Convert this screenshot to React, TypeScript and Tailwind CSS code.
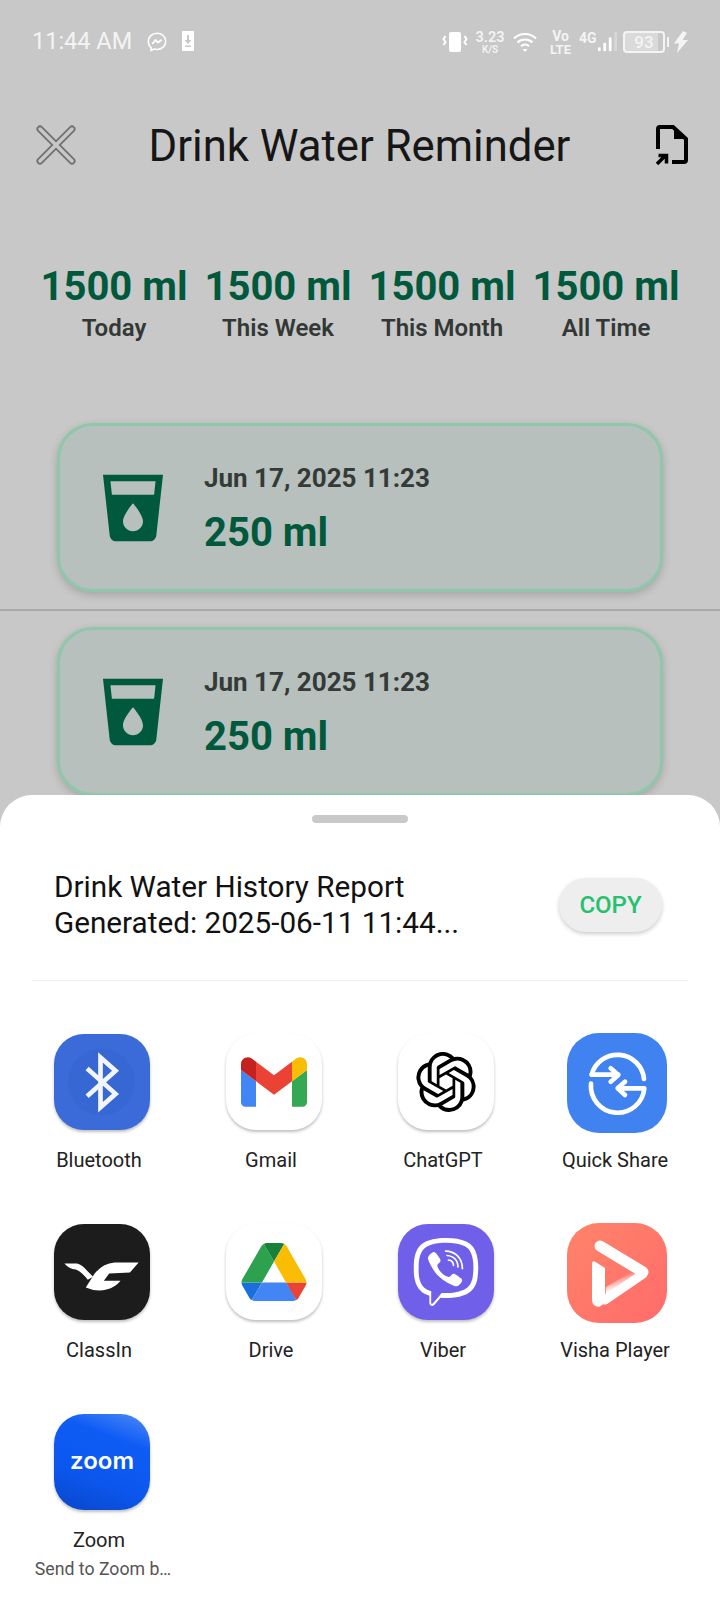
import { SiOpenai, SiViber } from "react-icons/si";

const stats = [
  { value: "1500 ml", label: "Today" },
  { value: "1500 ml", label: "This Week" },
  { value: "1500 ml", label: "This Month" },
  { value: "1500 ml", label: "All Time" },
];

function CupIcon() {
  return (
    <svg viewBox="0 0 24 24" className="w-20 h-20 shrink-0" fill="#00593c">
      <path d="M3 2l2.010 18.230C5.130 21.230 5.970 22 7 22h10c1.030 0 1.870-.77 1.990-1.770L21 2H3zm9 17c-1.660 0-3-1.340-3-3 0-2 3-5.400 3-5.400s3 3.400 3 5.400c0 1.660-1.340 3-3 3zm6.330-11H5.670l-.44-4h13.530l-.43 4z" />
    </svg>
  );
}

function HistoryCard() {
  return (
    <div className="h-[169px] rounded-[36px] border-[3px] border-[#8fc7ab] bg-[#b7c0bc] shadow-[0_3px_8px_rgba(0,0,0,0.18)] flex items-center pl-[33px]">
      <CupIcon />
      <div className="ml-[31px] mt-[2px]">
        <div className="text-[26px] leading-[34px] font-bold text-[#343a38]">Jun 17, 2025 11:23</div>
        <div className="text-[40px] leading-[48px] font-bold text-[#00593c] mt-[14px]">250 ml</div>
      </div>
    </div>
  );
}

function StatusBar() {
  return (
    <div className="h-[82px] pt-[2px] pl-[32px] pr-[32px] flex items-center justify-between text-white">
      <div className="flex items-center">
        <span className="text-[23.5px] leading-none text-[#f4f4f4]">11:44 AM</span>
        <svg viewBox="0 0 24 24" className="w-[22px] h-[22px] ml-[14px]" fill="none" stroke="#fff" strokeWidth="1.700">
          <path d="M12 2.500c-5.400 0-9.500 3.900-9.500 9 0 2.700 1.100 5 3 6.600v3.200l3-1.600c1.100.3 2.300.5 3.500.5 5.400 0 9.500-3.900 9.500-9s-4.100-8.700-9.500-8.700z" />
          <path d="M6.800 14l3.700-4 2.600 2.500L17.200 9.500" strokeWidth="2" />
        </svg>
        <svg viewBox="0 0 14 22" className="w-[14px] h-[22px] ml-[13px]">
          <rect x="1" y="0" width="12" height="20" fill="#fff" />
          <path d="M6 4h2v5h2.500L7 13 3.500 9H6zM4 14.500h6V16H4z" fill="#c8c8c8" />
        </svg>
      </div>
      <div className="flex items-center">
        <svg viewBox="0 0 26 22" className="w-[26px] h-[22px]" fill="none">
          <rect x="7" y="1" width="12" height="20" rx="2" fill="#fff" />
          <path d="M3.500 5L1.500 8l2 3-2 3M22.500 5l2 3-2 3 2 3" stroke="#fff" strokeWidth="2" />
        </svg>
        <div className="ml-[7px] w-[30px] flex flex-col items-center font-semibold text-[#f4f4f4] leading-none">
          <span className="text-[14.5px] leading-[15px]">3.23</span>
          <span className="text-[10px] leading-[10px]">K/S</span>
        </div>
        <svg viewBox="0 0 24 22" className="w-[24px] h-[22px] ml-[8px]" fill="none" stroke="#fff" strokeWidth="2.200">
          <path d="M1 7.500c6-6 16-6 22 0M4.500 11.500c4-4 11-4 15 0M8 15.200c2.300-2.200 5.700-2.200 8 0" />
          <path d="M12 21l-2.500-3h5z" fill="#fff" stroke="none" />
        </svg>
        <div className="ml-[13px] w-[21px] flex flex-col items-center font-bold text-[#f4f4f4] leading-none">
          <span className="text-[14px] leading-[14px]">Vo</span>
          <span className="text-[13px] leading-[13px]">LTE</span>
        </div>
        <span className="ml-[8px] w-[18px] text-[14px] leading-none font-bold text-[#f4f4f4] -mt-[8px]">4G</span>
        <svg viewBox="0 0 22 24" className="w-[20px] h-[24px]" fill="#fff">
          <rect x="1" y="18" width="3" height="4" />
          <rect x="7" y="13" width="3" height="9" />
          <rect x="13" y="7" width="3" height="15" />
          <rect x="19" y="1" width="3" height="21" fill="#d8d8d8" />
        </svg>
        <div className="ml-[6px] w-[42px] h-[22px] rounded-[4px] border-2 border-[#f4f4f4] flex items-center justify-center text-[17px] font-medium leading-none text-[#f4f4f4] bg-[linear-gradient(90deg,#dadada_0%,#dadada_88%,transparent_88%)]">
          93
        </div>
        <div className="w-[2px] h-[10px] bg-[#f4f4f4] ml-[2px]" />
        <svg viewBox="0 0 14 22" className="w-[14px] h-[22px] ml-[5px]" fill="#f4f4f4">
          <path d="M9 0L0 12.500h5L3 22l11-13H8.500L13 2z" />
        </svg>
      </div>
    </div>
  );
}

function Header() {
  return (
    <div className="h-[126px] pl-[36px] pr-[32px] flex items-center justify-between">
      <svg viewBox="0 0 40 40" className="w-10 h-10" fill="none" strokeLinecap="round">
        <path d="M4 4l32 32M36 4L4 36" stroke="#707070" strokeWidth="7" />
        <path d="M4 4l32 32M36 4L4 36" stroke="#c8c8c8" strokeWidth="3.500" />
      </svg>
      <h1 className="text-[43.7px] leading-none text-[#161616] font-normal mr-[13px] mt-[4px]">Drink Water Reminder</h1>
      <svg viewBox="0 0 32 40" className="w-[32px] h-[40px]" fill="none">
        <path d="M2 24V4a2 2 0 0 1 2-2h13l13 12v21a2 2 0 0 1-2 2h-12" stroke="#000" strokeWidth="4" />
        <path d="M18 1l13 13H18z" fill="#000" />
        <path d="M1 39l8-8m-6.500-.5h8v8" stroke="#000" strokeWidth="3.500" />
      </svg>
    </div>
  );
}

function Tile({ bg, children }: { bg: string; children: React.ReactNode }) {
  return (
    <div className={`w-[96px] h-[96px] rounded-[30px] flex items-center justify-center overflow-hidden shadow-[0_2px_3px_rgba(0,0,0,0.25)] ${bg}`}>
      {children}
    </div>
  );
}

function BluetoothIcon() {
  return (
    <Tile bg="bg-[#3a6bd9]">
      <svg viewBox="163 72 287 287" className="w-[96px] h-[96px]" fill="none">
        <circle cx="305" cy="215" r="100" fill="#3667d2" />
        <path d="M262 175l85 76-45 40V142l45 40-85 76" stroke="#f2f5fc" strokeWidth="14" />
      </svg>
    </Tile>
  );
}

function GmailIcon() {
  return (
    <Tile bg="bg-white">
      <svg viewBox="52 42 88 66" className="w-[66px] h-[50px]">
        <path fill="#4285f4" d="M58 108h14V74L52 59v43c0 3.320 2.690 6 6 6" />
        <path fill="#34a853" d="M120 108h14c3.320 0 6-2.690 6-6V59l-20 15" />
        <path fill="#fbbc04" d="M120 48v26l20-15v-8c0-7.420-8.470-11.650-14.400-7.200" />
        <path fill="#ea4335" d="M72 74V48l24 18 24-18v26L96 92" />
        <path fill="#c5221f" d="M52 51v8l20 15V48l-5.600-4.200c-5.940-4.450-14.400-.22-14.400 7.200" />
      </svg>
    </Tile>
  );
}

function ChatGptIcon() {
  return (
    <Tile bg="bg-white">
      <SiOpenai size={60} color="#000" />
    </Tile>
  );
}

function QuickShareIcon() {
  return (
    <div className="w-[100px] h-[100px] rounded-[32px] bg-[#3f82f0] flex items-center justify-center -translate-x-[1px] translate-y-[1px]">
      <svg viewBox="0 0 300 300" className="w-[100px] h-[100px]" fill="none" stroke="#fff" strokeWidth="14" strokeLinecap="round" strokeLinejoin="round">
        <path d="M74 125A80 80 0 0 1 231 138" />
        <path d="M74 125H154M131 106l23 20-23 20" />
        <path d="M72 152A80 80 0 0 0 232 166H152M174 146l-22 20 22 20" />
      </svg>
    </div>
  );
}

function ClassInIcon() {
  return (
    <Tile bg="bg-[#1c1c1c]">
      <svg viewBox="163 42 287 287" className="w-[96px] h-[96px]" fill="#fff">
        <path d="M194 160h38q16 4 30 22l18 18-16 9q-18-24-36-31-20-2-34-18z" />
        <path d="M416 157h-72q-36 3-60 34l-26 41q32 14 62 6 26-6 42-26h-50l16-22 62-3z" />
      </svg>
    </Tile>
  );
}

function DriveIcon() {
  return (
    <Tile bg="bg-white">
      <svg viewBox="0 0 87.300 78" className="w-[66px] h-[58px]">
        <path d="m6.600 66.850 3.850 6.650c.8 1.400 1.950 2.500 3.300 3.300l13.750-23.800h-27.500c0 1.550.4 3.100 1.200 4.500z" fill="#1a6fdc" />
        <path d="m43.650 25-13.750-23.800c-1.350.8-2.500 1.900-3.300 3.300l-25.400 44a9.060 9.060 0 0 0 -1.200 4.500h27.500z" fill="#2ca24f" />
        <path d="m73.550 76.800c1.350-.8 2.500-1.900 3.300-3.300l1.600-2.750 7.650-13.250c.8-1.400 1.200-2.950 1.200-4.500h-27.502l5.852 11.500z" fill="#ea4335" />
        <path d="m43.650 25 13.750-23.800c-1.350-.8-2.900-1.200-4.500-1.200h-18.500c-1.600 0-3.150.45-4.500 1.200z" fill="#188038" />
        <path d="m59.800 53h-32.300l-13.750 23.800c1.350.8 2.900 1.200 4.500 1.200h50.800c1.600 0 3.150-.45 4.500-1.200z" fill="#4285f4" />
        <path d="m73.400 26.500-12.700-22c-.8-1.400-1.950-2.500-3.300-3.300l-13.750 23.800 16.150 28h27.450c0-1.550-.4-3.100-1.200-4.500z" fill="#fbbc04" />
      </svg>
    </Tile>
  );
}

function ViberIcon() {
  return (
    <Tile bg="bg-[#6f5fe9]">
      <SiViber size={68} color="#fff" />
    </Tile>
  );
}

function VishaIcon() {
  return (
    <div className="w-[100px] h-[100px] rounded-[32px] bg-[linear-gradient(135deg,#ff8469,#ff6b6b)] flex items-center justify-center -translate-x-[1px] translate-y-[1px]">
      <svg viewBox="0 0 100 100" className="w-[100px] h-[100px]" fill="none">
        <defs>
          <linearGradient id="vishaFade" gradientUnits="userSpaceOnUse" x1="48" y1="74" x2="42" y2="56">
            <stop offset="0" stopColor="#fff" />
            <stop offset="0.35" stopColor="#fff" />
            <stop offset="1" stopColor="#fff" stopOpacity="0" />
          </linearGradient>
        </defs>
        <path d="M39 64L63 50 76 50 38 80z" fill="url(#vishaFade)" />
        <path d="M33 23L76 49" stroke="#fff" strokeWidth="11" strokeLinecap="round" />
        <path d="M76 51L38 77" stroke="#fff" strokeWidth="9" strokeLinecap="round" />
        <path d="M25 41q0-4 3.500-2l9.500 6v35l-6 4q-7-1-7-7z" fill="#fff" />
      </svg>
    </div>
  );
}

function ZoomIcon() {
  return (
    <Tile bg="bg-[linear-gradient(200deg,#4d8bf5_0%,#0f5cf5_28%,#0b57ee_65%,#0a46c8_100%)]">
      <span className="font-['Inter',sans-serif] text-[24px] font-semibold leading-none text-white -mt-[2px]">zoom</span>
    </Tile>
  );
}

const apps = [
  { name: "Bluetooth", icon: <BluetoothIcon /> },
  { name: "Gmail", icon: <GmailIcon /> },
  { name: "ChatGPT", icon: <ChatGptIcon /> },
  { name: "Quick Share", icon: <QuickShareIcon /> },
  { name: "ClassIn", icon: <ClassInIcon /> },
  { name: "Drive", icon: <DriveIcon /> },
  { name: "Viber", icon: <ViberIcon /> },
  { name: "Visha Player", icon: <VishaIcon /> },
  { name: "Zoom", sub: "Send to Zoom b…", icon: <ZoomIcon /> },
];

export default function App() {
  return (
    <div className="w-[720px] h-[1612px] overflow-hidden bg-[#c8c8c8] font-['Roboto',sans-serif]">
      {/* Fondo con la pantalla oscurecida */}
      <div className="h-[795px] overflow-hidden">
        <StatusBar />
        <Header />
        <div className="mt-[55px] px-[32px] grid grid-cols-4">
          {stats.map((s) => (
            <div key={s.label} className="flex flex-col items-center">
              <div className="text-[40px] leading-[48px] font-bold text-[#00593c] whitespace-nowrap">{s.value}</div>
              <div className="text-[24px] leading-[32px] font-semibold text-[#333836] mt-[1px] whitespace-nowrap">{s.label}</div>
            </div>
          ))}
        </div>
        <div className="mt-[79px] px-[57px] pb-[17px] border-b-2 border-[#a9a9a9]">
          <HistoryCard />
        </div>
        <div className="pt-[16px] px-[57px]">
          <HistoryCard />
        </div>
      </div>

      {/* Hoja de compartir */}
      <div className="h-[817px] bg-white rounded-t-[32px] pt-[20px]">
        <div className="w-[96px] h-[8px] rounded-full bg-[#c9c9c9] mx-auto" />
        <div className="mt-[46px] pl-[54px] pr-[58px] flex items-center justify-between">
          <div className="text-[29.7px] leading-[36px] text-[#111]">
            <div>Drink Water History Report</div>
            <div>Generated: 2025-06-11 11:44...</div>
          </div>
          <div className="w-[103px] h-[54px] rounded-full bg-[#eeeeee] shadow-[0_2px_4px_rgba(0,0,0,0.2)] flex items-center justify-center text-[24px] font-medium text-[#25c16f]">
            COPY
          </div>
        </div>
        <div className="mt-[39px] mx-[32px] h-px bg-[#eeeeee]" />
        <div className="mt-[53px] px-[16px] grid grid-cols-4 auto-rows-[190px]">
          {apps.map((a) => (
            <div key={a.name} className="flex flex-col items-center">
              <div className="h-[96px] flex items-center justify-center">{a.icon}</div>
              <div className="mt-[17px] mr-[6px] text-[20px] leading-[26px] text-[#222]">{a.name}</div>
              {a.sub && <div className="mt-[4px] ml-[2px] text-[17.7px] leading-[24px] text-[#555]">{a.sub}</div>}
            </div>
          ))}
        </div>
      </div>
    </div>
  );
}
